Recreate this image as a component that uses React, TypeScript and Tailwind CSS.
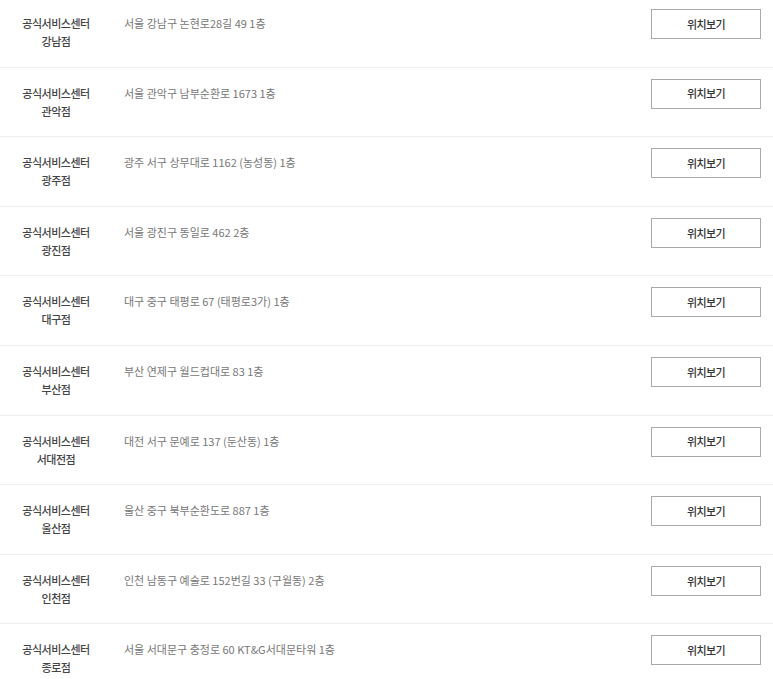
import React from 'react';

const CENTERS = [
  { name: '강남점', addr: '서울 강남구 논현로28길 49 1층' },
  { name: '관악점', addr: '서울 관악구 남부순환로 1673 1층' },
  { name: '광주점', addr: '광주 서구 상무대로 1162 (농성동) 1층' },
  { name: '광진점', addr: '서울 광진구 동일로 462 2층' },
  { name: '대구점', addr: '대구 중구 태평로 67 (태평로3가) 1층' },
  { name: '부산점', addr: '부산 연제구 월드컵대로 83 1층' },
  { name: '서대전점', addr: '대전 서구 문예로 137 (둔산동) 1층' },
  { name: '울산점', addr: '울산 중구 북부순환도로 887 1층' },
  { name: '인천점', addr: '인천 남동구 예술로 152번길 33 (구월동) 2층' },
  { name: '종로점', addr: '서울 서대문구 충정로 60 KT&G서대문타워 1층' },
];

export default function App() {
  return (
    <div className="w-full bg-white overflow-hidden h-[679px] font-['Noto_Sans_CJK_KR','Noto_Sans',sans-serif]">
      <ul className="-mt-[2px]">
        {CENTERS.map(c => (
          <li key={c.name} className="flex items-start h-[69.6px] border-b border-[#eeeeee]">
            <div className="w-[112px] pt-[16px] text-center text-[11px] leading-[18px] font-medium text-[#444] tracking-[-0.5px]">
              <p>공식서비스센터</p>
              <p>{c.name}</p>
            </div>
            <div className="flex-1 pl-[12px] pt-[16px] text-[11px] leading-[18px] text-[#777]">
              {c.addr}
            </div>
            <button className="mt-[11px] mr-[12px] w-[110px] h-[30px] border border-[#aaa] bg-white text-[11px] font-medium text-[#333] tracking-[-0.6px]">
              위치보기
            </button>
          </li>
        ))}
      </ul>
    </div>
  );
}
